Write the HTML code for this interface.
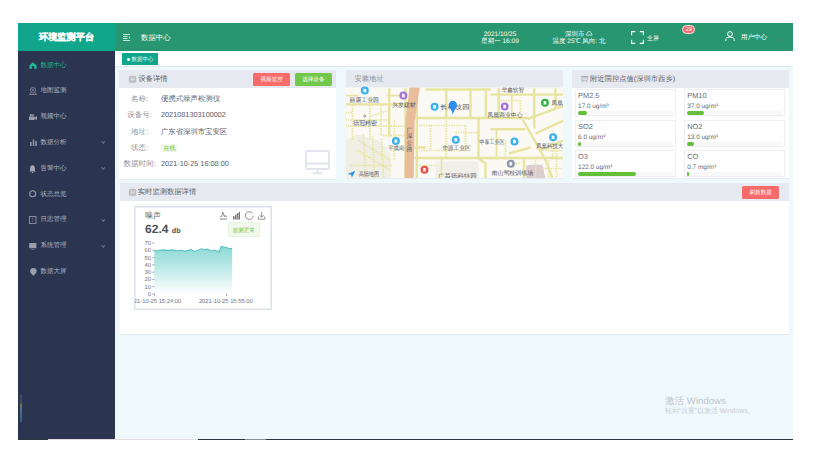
<!DOCTYPE html>
<html><head><meta charset="utf-8">
<style>
*{box-sizing:border-box;margin:0;padding:0}
html,body{width:835px;height:463px;overflow:hidden;background:#fff;font-family:"Liberation Sans",sans-serif;position:relative;text-rendering:geometricPrecision}
.a{position:absolute;white-space:nowrap}
svg{position:absolute;overflow:visible}
#logo{left:18px;top:23px;width:97px;height:28px;background:#0fa68c;color:#fff;font-weight:bold;font-size:9.2px;line-height:29.5px;text-align:center;-webkit-text-stroke:0.25px #fff}
#hdr{left:115px;top:23px;width:678px;height:28px;background:#289670;color:#fff}
#side{left:18px;top:51px;width:97px;height:388px;background:#2b3550}
.mi{position:absolute;left:0;width:97px;height:14px;color:#adb6c4;font-size:6.5px;line-height:14px}
.mi .t{position:absolute;left:22.5px;top:0}
.mi svg{left:11px;top:3px}
.mi .ch{position:absolute;left:83.5px;top:4.5px;width:2.6px;height:2.6px;border-right:0.7px solid #6f7789;border-bottom:0.7px solid #6f7789;transform:rotate(45deg)}
#tagbar{left:115px;top:51px;width:678px;height:16px;background:#fff;border-bottom:1px solid #dde7f0}
#main{left:115px;top:67px;width:678px;height:372px;background:#eff9fc}
.card{position:absolute;background:#fff;box-shadow:0 0.8px 0 #e4e9ee}
.chd{position:absolute;left:0;top:0;right:0;height:17.5px;background:#e6e9ef;color:#606266;font-size:7.3px;line-height:17.5px}
.hw{font-size:6.5px;line-height:7px;text-align:center;color:#fff}
.btn{color:#fff;font-size:5.6px;line-height:14.6px;text-align:center;border-radius:1.5px}
.lb{position:absolute;left:0;width:41px;text-align:center;color:#909399;font-size:7.5px;line-height:9px;white-space:nowrap}
.vl{position:absolute;left:42px;color:#5d6067;font-size:7.3px;line-height:9px;white-space:nowrap}
.cell{position:absolute;width:100.5px;height:27.5px;border:0.7px solid #eceef3;background:#fff}
.cell .n{position:absolute;left:2.1px;top:1.5px;font-size:7.4px;line-height:9px;color:#66696f}
.cell .u{position:absolute;left:2.1px;top:13.2px;font-size:6.4px;line-height:7px;color:#66696f}
.cell .tr{position:absolute;left:2px;top:21.5px;width:95px;height:3.6px;border-radius:2px;background:#f8f8f8}
.cell .tr i{position:absolute;left:0;top:0;height:3.6px;border-radius:2px;background:#62c039}
</style></head><body>
<div id="logo" class="a">环境监测平台</div>
<div id="hdr" class="a">
  <svg style="left:8px;top:11px" width="8" height="7" viewBox="0 0 8 7"><path d="M0 0.5H7M0 2.5H4.5M0 4.5H4.5M0 6.5H7" stroke="#c8ecd9" stroke-width="1"/><path d="M7 2.2L5.5 3.5L7 4.8Z" fill="#d0f0e0"/></svg>
  <div class="a" style="left:26px;top:10px;font-size:7.4px;line-height:9px">数据中心</div>
  <div class="a hw" style="left:355px;top:8px;width:60px">2021/10/25<br>星期一 16:09</div>
  <div class="a hw" style="left:428px;top:8px;width:72px">深圳市 <span style="display:inline-block;width:6.5px"></span><br>温度 25℃ 风向: 北</div>
  <svg style="left:515.5px;top:8px" width="13" height="13" viewBox="0 0 13 13"><path d="M0.6 4.2V0.6H4.2M8.8 0.6H12.4V4.2M12.4 8.8V12.4H8.8M4.2 12.4H0.6V8.8" fill="none" stroke="#f4fbf7" stroke-width="1.15"/></svg><svg style="left:471.2px;top:8.3px" width="6.5" height="4.6" viewBox="0 0 6.5 4.6"><path d="M0.5 4.1H6C6.3 4.1 6.1 3.2 5.6 3C5.4 1.6 4.3 0.5 3.2 0.5S1 1.6 0.9 3C0.4 3.2 0.2 4.1 0.5 4.1Z" fill="none" stroke="#e8f6ee" stroke-width="0.8"/></svg>
  <div class="a" style="left:532px;top:11.5px;font-size:6px;line-height:8px">全屏</div>
  <div class="a" style="left:567.3px;top:2.3px;width:12.7px;height:8.3px;border-radius:5px;background:#f46d6d;border:0.7px solid #f3e6e0;font-size:5.6px;line-height:8px;text-align:center;letter-spacing:-0.2px">29</div>
  <svg style="left:610px;top:8px" width="10" height="10" viewBox="0 0 10 10"><circle cx="5" cy="3" r="2.4" fill="none" stroke="#fff" stroke-width="1"/><path d="M0.8 10V8.6C0.8 7 2.2 6.2 5 6.2S9.2 7 9.2 8.6V10" fill="none" stroke="#fff" stroke-width="1"/></svg>
  <div class="a" style="left:626px;top:11px;font-size:6.5px;line-height:8px">用户中心</div>
  <div class="a" style="left:665px;top:16.3px;width:2px;height:2px;border-radius:1px;background:#5f6d69"></div>
</div>
<div id="side" class="a">
  <div class="mi" style="top:7.50px;color:#1fb894"><svg width="8" height="7" viewBox="0 0 8 7" style="left:11px;top:3.5px"><path d="M4 0.2L7.6 3.4V6.8H5.1V5C5.1 4.4 4.6 4 4 4S2.9 4.4 2.9 5V6.8H0.4V3.4Z" fill="#1fb894"/></svg><span class="t">数据中心</span></div>
  <div class="mi" style="top:33.33px"><svg width="8" height="8" viewBox="0 0 8 8" style="left:11px;top:2.8px"><path d="M4 0.5A2.6 2.6 0 0 1 6.6 3.1C6.6 4.6 4 6.5 4 6.5S1.4 4.6 1.4 3.1A2.6 2.6 0 0 1 4 0.5Z M2.3 5.2L0.5 7.5H7.5L5.7 5.2" fill="none" stroke="#9a9fab" stroke-width="0.7"/><circle cx="4" cy="3" r="0.9" fill="none" stroke="#9a9fab" stroke-width="0.6"/></svg><span class="t">地图监测</span></div>
  <div class="mi" style="top:59.16px"><svg width="8" height="6" viewBox="0 0 8 6" style="left:11px;top:3.6px"><path d="M0 2.5H5.5V6H0Z M5.5 3.4L8 2V6L5.5 4.8Z" fill="#9a9fab"/><circle cx="1.8" cy="1.2" r="1.1" fill="#9a9fab"/><circle cx="4" cy="1.3" r="1" fill="#9a9fab"/></svg><span class="t">视频中心</span></div>
  <div class="mi" style="top:84.99px"><svg width="7" height="7" viewBox="0 0 7 7" style="left:11.5px;top:3.5px"><path d="M0.2 3H1.6V7H0.2Z M2.8 0.5H4.2V7H2.8Z M5.4 2H6.8V7H5.4Z" fill="#9a9fab"/></svg><span class="t">数据分析</span><i class="ch"></i></div>
  <div class="mi" style="top:110.82px"><svg width="7" height="8" viewBox="0 0 7 8" style="left:11.3px;top:3px"><path d="M3.5 0.3C5.2 0.3 5.9 1.8 5.9 3.5V5.5L6.9 6.6H0.1L1.1 5.5V3.5C1.1 1.8 1.8 0.3 3.5 0.3Z M2.5 7.1H4.5C4.5 7.7 4 8 3.5 8S2.5 7.7 2.5 7.1Z" fill="#a3a8b3"/></svg><span class="t">告警中心</span><i class="ch"></i></div>
  <div class="mi" style="top:136.65px"><svg width="8" height="8" viewBox="0 0 8 8" style="left:11px;top:2.7px"><circle cx="3.7" cy="3.7" r="3" fill="none" stroke="#9a9fab" stroke-width="1.1"/></svg><span class="t">状态总览</span></div>
  <div class="mi" style="top:162.48px"><svg width="8" height="8" viewBox="0 0 8 8" style="left:11px;top:2.4px"><rect x="0.5" y="0.5" width="6.5" height="7" fill="none" stroke="#8f95a2" stroke-width="0.9"/><path d="M3.7 2V3M3.7 4.5V5.5" stroke="#8f95a2" stroke-width="0.8"/></svg><span class="t">日志管理</span><i class="ch"></i></div>
  <div class="mi" style="top:188.31px"><svg width="8" height="8" viewBox="0 0 8 8" style="left:11px;top:3.5px"><path d="M0.2 0H7.4V5.2H0.2Z M2.2 6.4H5.4V7H2.2Z" fill="#9a9fab"/></svg><span class="t">系统管理</span><i class="ch"></i></div>
  <div class="mi" style="top:214.14px"><svg width="7" height="8" viewBox="0 0 7 8" style="left:11.5px;top:3.2px"><path d="M3.4 0A3.3 3.3 0 0 1 6.7 3.3C6.7 5.2 3.4 7.8 3.4 7.8S0.1 5.2 0.1 3.3A3.3 3.3 0 0 1 3.4 0Z" fill="#9a9fab"/></svg><span class="t">数据大屏</span></div>
  <div class="a" style="left:1.5px;top:344px;width:2.5px;height:27px;background:linear-gradient(#434b5e 0,#434b5e 30%,#6d7448 35%,#4d7788 50%,#345f78 100%);width:2px"></div>
</div>
<div id="tagbar" class="a">
  <div class="a" style="left:7px;top:2.3px;width:36px;height:11.7px;background:#0fa68c;color:#fff;font-size:5.8px;line-height:11.7px"><i style="position:absolute;left:4.8px;top:4.8px;width:2.8px;height:2.8px;border-radius:50%;background:#fff"></i><span style="position:absolute;left:9.5px;top:1.3px;font-size:5.5px;line-height:10px">数据中心</span></div>
</div>
<div id="main" class="a">
  <!-- card1 -->
  <div class="card" style="left:4px;top:3px;width:217px;height:108.5px">
    <div class="chd"><svg style="left:9.8px;top:5.6px" width="7" height="6.5" viewBox="0 0 7 6.5"><rect x="0.3" y="0.3" width="6.5" height="6" rx="1" fill="#c3c6cc" stroke="#a4a7ae" stroke-width="0.6"/><path d="M1.5 4.2L3 2.8L4 3.8L5.5 2.4" fill="none" stroke="#eceef2" stroke-width="0.8"/></svg><span class="a" style="left:19.4px;top:0">设备详情</span>
      <div class="a btn" style="left:134.3px;top:3.2px;width:36.7px;height:12.4px;background:#f76b6b">视频监控</div>
      <div class="a btn" style="left:175.9px;top:3.2px;width:36.9px;height:12.4px;background:#72c84a">选择设备</div>
    </div>
    <div class="lb" style="top:24.3px">名称:</div><div class="vl" style="top:24.3px;font-size:7.4px">便携式噪声检测仪</div>
    <div class="lb" style="top:40.2px">设备号:</div><div class="vl" style="top:40.2px">2021081303100002</div>
    <div class="lb" style="top:56.7px">地址:</div><div class="vl" style="top:56.7px;font-size:7.35px">广东省深圳市宝安区</div>
    <div class="lb" style="top:73.2px">状态:</div><div class="a" style="left:42.3px;top:73.7px;width:16.2px;height:8.2px;background:#eef8e8;border-radius:1px;color:#6ac13f;font-size:6px;line-height:10.6px;text-align:center">在线</div>
    <div class="lb" style="top:89px">数据时间:</div><div class="vl" style="top:89px">2021-10-25 16:08:00</div>
    <svg style="left:186px;top:79.7px" width="25" height="25" viewBox="0 0 25 25"><rect x="1" y="1" width="23" height="18" rx="1.5" fill="none" stroke="#e2e5eb" stroke-width="2"/><path d="M1 13.6H24" stroke="#e2e5eb" stroke-width="2"/><path d="M12.5 19V23M7.5 23.3H17.5" stroke="#e2e5eb" stroke-width="2"/></svg>
  </div>
  <!-- card2 map -->
  <div class="card" style="left:230.5px;top:3px;width:217px;height:108px;overflow:hidden">
    <div class="chd" style="color:#8a8d93"><span class="a" style="left:9px;top:0">安装地址</span></div>
    <svg style="left:0;top:17.5px" width="217" height="90.5" viewBox="345.5 87.5 217 90.5"><rect x="345" y="87" width="218" height="92" fill="#faf9f3"/><path d="M357.2 133.8 L378.5 139.9 L390.7 154.1 L390.7 178 L345 178 L345 140Z" fill="#f0efe6"/><path d="M435 161 H478 V178 H435Z" fill="#f1f0e8"/><path d="M528 164.3 H541.8 L545 178 H525.6 V168 Q525.6 164.3 528 164.3Z" fill="#dccdd1"/><g fill="none" stroke="#e7e4a0" stroke-width="1.7" stroke-dasharray="1.5 1"><path d="M352 105 V140"/><path d="M369.4 105 V140"/><path d="M380.6 105 V134"/><path d="M393.8 120 V159"/><path d="M345 125.6 H405"/><path d="M380 134.8 H405"/><path d="M345 119.5 H388"/><path d="M370 116 L388 110"/><path d="M345 112 H352"/><path d="M418 125 H465"/><path d="M418 150 H465"/><path d="M430 125 V150"/><path d="M445.7 117.5 V157.5"/><path d="M465 125 V150"/><path d="M455 132 H478"/><path d="M500 100 H520"/><path d="M520 100 V114"/><path d="M505 140 V157.5"/><path d="M535 160 V178"/><path d="M540 168 H563"/><path d="M548 160 V178"/><path d="M556 150 V178"/><path d="M545 150 H563"/><path d="M552 130 V160"/><path d="M358 140 L390 160"/><path d="M357 150 L390 170"/><path d="M363 133.8 L365 178"/><path d="M372 136 L374 178"/><path d="M381 138 L383 178"/><path d="M350 165 H392"/><path d="M490 138 H500"/><path d="M508 166 L520 162"/><path d="M418 165 H436"/></g><g fill="none" stroke="#e7e4a0" stroke-width="1.6"><path d="M511.3 94 V118"/><path d="M496 128 V159"/><path d="M441 157.5 V178"/><path d="M345 95.1 H358"/><path d="M386 95.1 H402"/></g><g fill="none" stroke="#e7e4a0" stroke-width="2.4"><path d="M345 103.9 H405"/><path d="M388.7 88 V136.8"/><path d="M405 88 V178"/><path d="M414 117.5 H527"/><path d="M527 118.5 L563 105.3"/><path d="M414 157.5 H563"/><path d="M425 89 H490"/><path d="M490 94.1 H563"/><path d="M416.3 88 V178"/><path d="M445.7 88 V117.5"/><path d="M470 88 V117.5"/><path d="M478 117.5 V157.5"/><path d="M485.4 88 V117.5"/><path d="M498.1 88 V118"/><path d="M533.7 88 V128"/><path d="M555 88 V108"/><path d="M522.5 119.5 L544.9 159.2 L552 178"/><path d="M490 128.7 H525"/><path d="M523.5 159 V178"/><path d="M478 157.5 Q480 160 485 163 V178"/><path d="M535 133 L563 120"/><path d="M540 150 L563 140"/><path d="M414 147 H425"/><path d="M508.3 153 L530 147"/></g><path d="M409 87 L419.3 87 L414.2 120.5 L413.2 179 L404 179 L405 120.5Z" fill="#e9bd99"/><circle cx="364.3" cy="90" r="4" fill="#3cb0e8"/><path d="M362.90000000000003 88.2H364.90000000000003L365.7 89V91.8H362.90000000000003Z" fill="#fff" opacity="0.9"/><circle cx="402.9" cy="95.1" r="4" fill="#a572d8"/><path d="M401.5 93.3H403.5L404.29999999999995 94.1V96.89999999999999H401.5Z" fill="#fff" opacity="0.9"/><circle cx="434.1" cy="106.3" r="4" fill="#3cb0e8"/><path d="M432.70000000000005 104.5H434.70000000000005L435.5 105.3V108.1H432.70000000000005Z" fill="#fff" opacity="0.9"/><circle cx="395.4" cy="140.5" r="4" fill="#3cb0e8"/><path d="M394.0 138.7H396.0L396.79999999999995 139.5V142.3H394.0Z" fill="#fff" opacity="0.9"/><circle cx="424" cy="169.3" r="4" fill="#e8534e"/><path d="M422.6 167.5H424.6L425.4 168.3V171.10000000000002H422.6Z" fill="#fff" opacity="0.9"/><circle cx="504.2" cy="106" r="4" fill="#a572d8"/><path d="M502.8 104.2H504.8L505.59999999999997 105V107.8H502.8Z" fill="#fff" opacity="0.9"/><circle cx="544.5" cy="102.3" r="4" fill="#37b04a"/><path d="M543.1 100.5H545.1L545.9 101.3V104.1H543.1Z" fill="#fff" opacity="0.9"/><circle cx="455.3" cy="139.3" r="4" fill="#3cb0e8"/><path d="M453.90000000000003 137.5H455.90000000000003L456.7 138.3V141.10000000000002H453.90000000000003Z" fill="#fff" opacity="0.9"/><circle cx="514" cy="140.9" r="4" fill="#3cb0e8"/><path d="M512.6 139.1H514.6L515.4 139.9V142.70000000000002H512.6Z" fill="#fff" opacity="0.9"/><circle cx="552.6" cy="136.8" r="4" fill="#3cb0e8"/><path d="M551.2 135.0H553.2L554.0 135.8V138.60000000000002H551.2Z" fill="#fff" opacity="0.9"/><circle cx="510.3" cy="163.2" r="4" fill="#8a97aa"/><path d="M508.90000000000003 161.39999999999998H510.90000000000003L511.7 162.2V165.0H508.90000000000003Z" fill="#fff" opacity="0.9"/><g font-size="6" fill="#555661" font-family="Liberation Sans"><text x="349" y="101.3" textLength="29.5" lengthAdjust="spacingAndGlyphs">丽康工业园</text><text x="391.7" y="106.0" textLength="23.5" lengthAdjust="spacingAndGlyphs">兴发建材</text><text x="352.7" y="124.69999999999999" textLength="23.8" lengthAdjust="spacingAndGlyphs">德冠精密</text><text x="387.7" y="149.1" textLength="16.3" lengthAdjust="spacingAndGlyphs">平成岗</text><text x="441.7" y="149.1" textLength="28.3" lengthAdjust="spacingAndGlyphs">华源工业区</text><text x="437.6" y="177.5" textLength="38.6" lengthAdjust="spacingAndGlyphs">广慕德科特园</text><text x="439.6" y="108.1" textLength="29.4" lengthAdjust="spacingAndGlyphs">长科技园</text><text x="487" y="116.6" textLength="35" lengthAdjust="spacingAndGlyphs">凤凰商业中心</text><text x="501.2" y="91.8" textLength="22.3" lengthAdjust="spacingAndGlyphs">华鑫软智</text><text x="551" y="104.39999999999999" textLength="11.5" lengthAdjust="spacingAndGlyphs">凤凰</text><text x="479" y="143.6" textLength="25" lengthAdjust="spacingAndGlyphs">中泰工业区</text><text x="535.7" y="147.4" textLength="27" lengthAdjust="spacingAndGlyphs">凤凰科技大</text><text x="491" y="174.5" textLength="41.7" lengthAdjust="spacingAndGlyphs">南山驾校训练场</text><text x="358.2" y="175.5" textLength="20.3" lengthAdjust="spacingAndGlyphs">高德地图</text><text x="406" y="131.0" font-size="6">广</text><text x="406" y="137.6" font-size="6">深</text><text x="406" y="144.2" font-size="6">公</text><text x="406" y="150.8" font-size="6">路</text></g><circle cx="364.3" cy="115.5" r="1.1" fill="none" stroke="#6a6f7a" stroke-width="0.6"/><path d="M347.3 173.4 L354.8 170.2 L351.4 177 L350.7 174.2Z" fill="#2a8ee8"/><path d="M452.4 100.2 A4 4 0 0 1 456.4 104.3 C456.4 107.5 453 110 452.4 114.5 C451.8 110 448.4 107.5 448.4 104.3 A4 4 0 0 1 452.4 100.2Z" fill="#2d8cf0"/></svg>
  </div>
  <!-- card3 air -->
  <div class="card" style="left:456.5px;top:3px;width:217px;height:108px">
    <div class="chd"><svg style="left:9.4px;top:5.8px" width="7.2" height="6.5" viewBox="0 0 7.2 6.5"><path d="M0 0.6H7.2" stroke="#a9acb3" stroke-width="1.1"/><path d="M0.8 1.6H6.4V4.6H0.8Z" fill="none" stroke="#b1b4ba" stroke-width="0.8"/><path d="M2 2.9H5.2" stroke="#b9bcc2" stroke-width="0.6"/><path d="M1.8 4.6V6.3M5.4 4.6V6.3" stroke="#b1b4ba" stroke-width="0.9"/></svg><span class="a" style="left:18.5px;top:0">附近国控点值(深圳市西乡)</span></div>
    <div class="cell" style="left:3.5px;top:18.7px"><div class="n">PM2.5</div><div class="u">17.0 ug/m³</div><div class="tr"><i style="width:8.6px"></i></div></div>
<div class="cell" style="left:112.7px;top:18.7px"><div class="n">PM10</div><div class="u">37.0 ug/m³</div><div class="tr"><i style="width:17.3px"></i></div></div>
<div class="cell" style="left:3.5px;top:49.5px"><div class="n">SO2</div><div class="u">6.0 ug/m³</div><div class="tr"><i style="width:2.9px"></i></div></div>
<div class="cell" style="left:112.7px;top:49.5px"><div class="n">NO2</div><div class="u">13.0 ug/m³</div><div class="tr"><i style="width:6.7px"></i></div></div>
<div class="cell" style="left:3.5px;top:79.7px"><div class="n">O3</div><div class="u">122.0 ug/m³</div><div class="tr"><i style="width:58px"></i></div></div>
<div class="cell" style="left:112.7px;top:79.7px"><div class="n">CO</div><div class="u">0.7 mg/m³</div><div class="tr"><i style="width:1.5px"></i></div></div>

  </div>
  <!-- card4 realtime -->
  <div class="card" style="left:4.5px;top:116px;width:669px;height:150.5px">
    <div class="chd" style="height:18px;line-height:18px"><svg style="left:9.5px;top:6px" width="7" height="6.5" viewBox="0 0 7 6.5"><rect x="0.3" y="0.3" width="6.5" height="6" rx="1" fill="#c3c6cc" stroke="#a4a7ae" stroke-width="0.6"/><path d="M1.5 4.2L3 2.8L4 3.8L5.5 2.4" fill="none" stroke="#eceef2" stroke-width="0.8"/></svg><span class="a" style="left:18.3px;top:0">实时监测数据详情</span>
      <div class="a btn" style="left:622.8px;top:3.2px;width:36.8px;height:12.8px;background:#f76b6b">刷新数据</div>
    </div>
    <div class="a" style="left:14.5px;top:23px;width:137.5px;height:103.5px;background:#fff;border:1px solid #dde1eb;box-shadow:inset 0 0 0 1px #eef0f5, 0 0 1px rgba(0,0,0,0.06);overflow:hidden">
      <div class="a" style="left:10.1px;top:3.5px;font-size:8px;line-height:10px;color:#606266">噪声</div>
      <div class="a" style="left:10.1px;top:16px;font-size:12px;line-height:12px;font-weight:bold;color:#4b4f58">62.4 <span style="font-size:7.2px">db</span></div>
      <div class="a" style="left:92.6px;top:15.2px;width:32.1px;height:14.6px;background:#f0f9eb;border:0.7px solid #e6f5dd;border-radius:2px;color:#5fb835;font-size:5.5px;line-height:16px;text-align:center">监测正常</div>
      <svg style="left:-1px;top:-1px" width="137.5" height="103.5" viewBox="134 206 137.5 103.5">
        <defs><linearGradient id="g" x1="0" y1="0" x2="0" y2="1"><stop offset="0" stop-color="#8ed9d7"/><stop offset="0.5" stop-color="#c2ebe9"/><stop offset="1" stop-color="#ffffff"/></linearGradient></defs>
        <path d="M154.3 250.6 L156.5 251 L158.6 250.2 L164 249.9 L167.2 250.6 L172.6 249.9 L175.9 250.8 L182.3 250.2 L184.5 251.3 L191 249.7 L194.7 251.5 L201.7 248.8 L205 249.7 L207.1 249.2 L211.4 251 L214.7 250.2 L219 252.1 L221.1 246.7 L225.4 247.3 L229.7 248.8 L232.1 248.6 L232.1 293.9 L154.3 293.9Z" fill="url(#g)"/>
        <path d="M154.3 250.6 L156.5 251 L158.6 250.2 L164 249.9 L167.2 250.6 L172.6 249.9 L175.9 250.8 L182.3 250.2 L184.5 251.3 L191 249.7 L194.7 251.5 L201.7 248.8 L205 249.7 L207.1 249.2 L211.4 251 L214.7 250.2 L219 252.1 L221.1 246.7 L225.4 247.3 L229.7 248.8 L232.1 248.6" fill="none" stroke="#55c3c1" stroke-width="1.1"/>
        <g font-family="Liberation Sans" font-size="5.8" fill="#6e7079"><text x="150.9" y="245.08" text-anchor="end">70</text><path d="M152.3 243.08H154.6" stroke="#6e7079" stroke-width="0.6"/><text x="150.9" y="252.34" text-anchor="end">60</text><path d="M152.3 250.34H154.6" stroke="#6e7079" stroke-width="0.6"/><text x="150.9" y="259.60" text-anchor="end">50</text><path d="M152.3 257.60H154.6" stroke="#6e7079" stroke-width="0.6"/><text x="150.9" y="266.86" text-anchor="end">40</text><path d="M152.3 264.86H154.6" stroke="#6e7079" stroke-width="0.6"/><text x="150.9" y="274.12" text-anchor="end">30</text><path d="M152.3 272.12H154.6" stroke="#6e7079" stroke-width="0.6"/><text x="150.9" y="281.38" text-anchor="end">20</text><path d="M152.3 279.38H154.6" stroke="#6e7079" stroke-width="0.6"/><text x="150.9" y="288.64" text-anchor="end">10</text><path d="M152.3 286.64H154.6" stroke="#6e7079" stroke-width="0.6"/><text x="150.9" y="295.90" text-anchor="end">0</text><path d="M152.3 293.90H154.6" stroke="#6e7079" stroke-width="0.6"/>
        <path d="M154.3 293.9V296M226.5 293.4V296" stroke="#6e7079" stroke-width="0.6"/>
        <text x="154.3" y="303" text-anchor="middle">2021-10-25 15:24:00</text>
        <text x="225.8" y="303" text-anchor="middle">2021-10-25 15:55:00</text></g>
        <g fill="none" stroke="#7a7a7a" stroke-width="0.8">
          <path d="M220 216.8H221.6L222.9 212.2L224.4 216.8L225.3 215.2L226.2 216.8H227"/><path d="M219.8 219.1H227" stroke-width="0.9"/>
          <path d="M233 216.2H234.6V219.4H233Z M235.1 214.6H236.6V219.4H235.1Z M237.1 213H238.6V219.4H237.1Z M239 211.8H240V219.4H239Z" fill="#777" stroke="none"/>
          <path d="M252.4 213.2A3.9 3.9 0 1 0 253.2 215.6" stroke-width="0.85"/>
          <path d="M261.6 211.8V217.2M259.5 215.1L261.6 217.2L263.7 215.1M258.4 216.4V219.2H264.8V216.4"/>
        </g>
      </svg>
    </div>
  </div>
</div>
<div class="a" style="left:665px;top:395.6px;font-size:9.6px;line-height:11px;color:#c0c6ca">激活 Windows</div>
<div class="a" style="left:665px;top:407.6px;font-size:6.9px;line-height:8px;color:#c6ccd0">转到“设置”以激活 Windows。</div>
<div class="a" style="left:18px;top:438.5px;width:775px;height:1px;background:#2a3540"></div>
<div class="a" style="left:48px;top:438.5px;width:150px;height:1px;background:#dedede"></div>
<div class="a" style="left:245px;top:438.5px;width:21px;height:1px;background:#8a9296"></div>
</body></html>
